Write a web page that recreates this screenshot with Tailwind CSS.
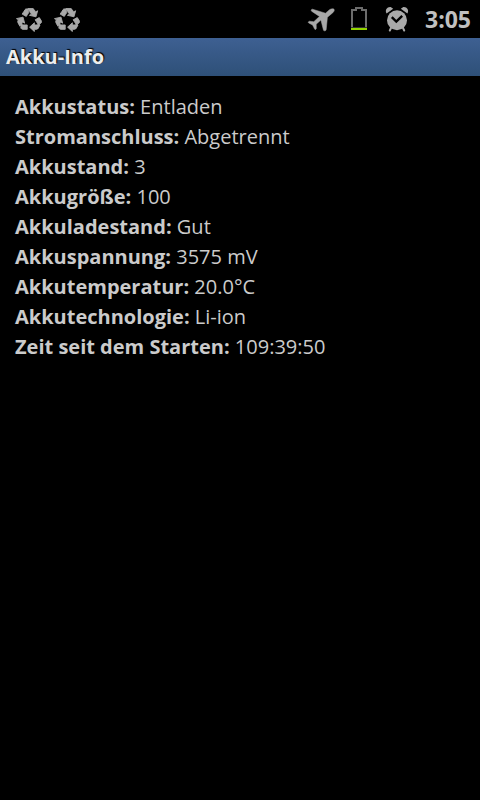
<!DOCTYPE html>
<html lang="de">
<head>
<meta charset="utf-8">
<meta name="viewport" content="width=device-width, initial-scale=1">
<title>Akku-Info</title>
<script src="https://cdn.jsdelivr.net/npm/@tailwindcss/browser@4"></script>
</head>
<body class="min-h-screen bg-black font-['Open_Sans','Noto_Sans',sans-serif] text-[#cbcbcb]">
<svg class="hidden" aria-hidden="true">
  <symbol id="recycle" viewBox="0.6 1.6 21.8 21.8" preserveAspectRatio="none">
    <path d="M5.77 7.15 7.2 4.78l1.03-1.71c.39-.65 1.33-.65 1.72 0l1.48 2.46-1.23 2.06-1 1.62-3.43-2.06zm15.95 5.82-1.6-2.66-3.46 2L18.87 16H20c.76 0 1.45-.43 1.79-1.11.14-.28.21-.58.21-.89 0-.36-.1-.71-.28-1.03zM16 21h1.5c.76 0 1.45-.43 1.79-1.11L20.74 17H16v-2l-4 4 4 4v-2zm-6-4H5.7l-.84 1.41c-.3.5-.32 1.12-.06 1.65.28.57.87.94 1.52.94H10v-4zm-3.88-2.65 1.73 1.04L6.48 9.9 1 11.27l1.7 1.02-.41.69c-.35.59-.38 1.31-.07 1.92l1.63 3.26 2.27-3.81zm10.9-9.21-1.3-2.17C15.35 2.37 14.7 2 14 2h-3.53l3.12 5.2-1.72 1.03 5.49 1.37 1.37-5.49-1.71 1.03z" fill="#a9a9a9" stroke="#a9a9a9" stroke-width=".8"/>
    <path d="M8.700 3.200H14.500L15.500 5M20 15.500L18.500 19.300H15.500M5 15.500L5.500 18.500" fill="none" stroke="#a9a9a9" stroke-width="1.800"/>
  </symbol>
</svg>
<header class="flex h-[38px] items-center justify-between pr-[9px] pl-4">
  <div class="flex gap-3 pt-0.5">
    <svg class="h-6 w-[26px]" role="img" aria-label="Recycling"><use href="#recycle"/></svg>
    <svg class="h-6 w-[26px]" role="img" aria-label="Recycling"><use href="#recycle"/></svg>
  </div>
  <div class="flex items-center">
    <svg class="h-[38px] w-[38px]" viewBox="302 0 38 38" role="img" aria-label="Flugmodus">
      <path d="M334 9.2C333 8.5 331 8.8 329.500 9.700L325.500 13.200L312.500 9.200C311.300 9 310.800 10.600 311.600 11.200L319.500 16.500C317 18.700 315 20.500 313.800 21.700L309.500 21.200C308.500 21.300 307.800 22.500 308.700 23L312.600 25L314.600 29C315 30 316.300 29.300 316.300 28.500L316.200 24.200L320.900 20L323.500 30.300C324.500 31.300 326 30.800 326.200 29.600L327.400 17.300L332.800 12.700C334.200 11.400 334.600 10 334 9.200Z" fill="#a9a9a9" stroke="#a9a9a9" stroke-width=".5"/>
    </svg>
    <svg class="h-[38px] w-[38px]" viewBox="340 0 38 38" role="img" aria-label="Akku fast leer">
      <path d="M352 28V10H356V8H362V10H366V28" fill="none" stroke="#6c6c6c" stroke-width="2"/>
      <path d="M351 27.500H367" stroke="#333"/>
      <rect x="351" y="28" width="16" height="2" fill="#94d500"/>
    </svg>
    <svg class="h-[38px] w-[38px]" viewBox="378 0 38 38" role="img" aria-label="Wecker gestellt">
      <g fill="#a9a9a9">
        <circle cx="397" cy="20.300" r="10"/>
        <path d="M386.600 13.500C384.500 10 387.500 6.500 391 7.200L393.200 8.800ZM407.400 13.500C409.500 10 406.500 6.500 403 7.200L400.800 8.800Z"/>
      </g>
      <path d="M391 28L389.800 30.500M403 28L404.200 30.500" stroke="#a9a9a9" stroke-width="2" stroke-linecap="round"/>
      <path d="M391.800 17.200L396.300 21.600L402.200 15.800" fill="none" stroke="#000" stroke-width="2.400"/>
    </svg>
    <time class="pl-[9px] text-[23px] leading-[38px] font-bold text-[#c0c0c0]">3:05</time>
  </div>
</header>
<h1 class="h-[38px] bg-linear-to-b from-[#3e6092] to-[#2e5078] px-[6px] text-[20px] leading-[37px] font-bold text-[#ededed] [text-shadow:1px_-1px_1px_#000]">Akku-Info</h1>
<main class="px-[15px] py-4 text-[20px] leading-[30px]">
  <p><b>Akkustatus:</b> Entladen</p>
  <p><b>Stromanschluss:</b> Abgetrennt</p>
  <p><b>Akkustand:</b> 3</p>
  <p><b>Akkugröße:</b> 100</p>
  <p><b>Akkuladestand:</b> Gut</p>
  <p><b>Akkuspannung:</b> 3575 mV</p>
  <p><b>Akkutemperatur:</b> 20.0°C</p>
  <p><b>Akkutechnologie:</b> Li-ion</p>
  <p><b>Zeit seit dem Starten:</b> 109:39:50</p>
</main>
</body>
</html>
